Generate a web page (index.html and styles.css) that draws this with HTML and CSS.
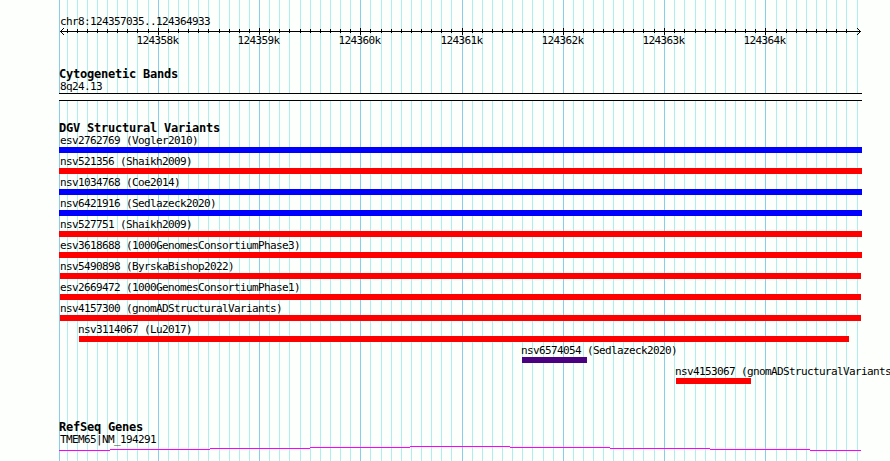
FILE: index.html
```html
<!DOCTYPE html>
<html lang="en">
<head>
<meta charset="utf-8">
<title>chr8:124357035..124364933</title>
<link rel="stylesheet" href="styles.css">
</head>
<body>
<main class="browser">
  <svg class="grid" width="890" height="461" aria-hidden="true">
    <path class="minor" d="M67.5 0v461M77.5 0v461M87.5 0v461M97.5 0v461M107.5 0v461M117.5 0v461M127.5 0v461M137.5 0v461M148.5 0v461M168.5 0v461M178.5 0v461M188.5 0v461M198.5 0v461M208.5 0v461M219.5 0v461M229.5 0v461M239.5 0v461M249.5 0v461M269.5 0v461M279.5 0v461M289.5 0v461M300.5 0v461M310.5 0v461M320.5 0v461M330.5 0v461M340.5 0v461M350.5 0v461M370.5 0v461M381.5 0v461M391.5 0v461M401.5 0v461M411.5 0v461M421.5 0v461M431.5 0v461M441.5 0v461M451.5 0v461M472.5 0v461M482.5 0v461M492.5 0v461M502.5 0v461M512.5 0v461M522.5 0v461M532.5 0v461M543.5 0v461M553.5 0v461M573.5 0v461M583.5 0v461M593.5 0v461M603.5 0v461M613.5 0v461M623.5 0v461M633.5 0v461M643.5 0v461M654.5 0v461M674.5 0v461M684.5 0v461M695.5 0v461M705.5 0v461M715.5 0v461M725.5 0v461M735.5 0v461M745.5 0v461M755.5 0v461M776.5 0v461M786.5 0v461M796.5 0v461M806.5 0v461M816.5 0v461M826.5 0v461M836.5 0v461M846.5 0v461M857.5 0v461"/>
    <path class="major" d="M59.5 0v461M158.5 0v461M259.5 0v461M360.5 0v461M462.5 0v461M563.5 0v461M664.5 0v461M765.5 0v461"/>
  </svg>

  <header class="ruler">
    <div class="label">chr8:124357035..124364933</div>
    <svg class="axis" width="803" height="20" viewBox="59 28 803 20">
      <path class="ink" d="M60 31.5H861M67.5 29v4M77.5 29v4M87.5 29v4M97.5 29v4M107.5 29v4M117.5 29v4M127.5 29v4M137.5 29v4M148.5 29v4M168.5 29v4M178.5 29v4M188.5 29v4M198.5 29v4M208.5 29v4M219.5 29v4M229.5 29v4M239.5 29v4M249.5 29v4M269.5 29v4M279.5 29v4M289.5 29v4M300.5 29v4M310.5 29v4M320.5 29v4M330.5 29v4M340.5 29v4M350.5 29v4M370.5 29v4M381.5 29v4M391.5 29v4M401.5 29v4M411.5 29v4M421.5 29v4M431.5 29v4M441.5 29v4M451.5 29v4M472.5 29v4M482.5 29v4M492.5 29v4M502.5 29v4M512.5 29v4M522.5 29v4M532.5 29v4M543.5 29v4M553.5 29v4M573.5 29v4M583.5 29v4M593.5 29v4M603.5 29v4M613.5 29v4M623.5 29v4M633.5 29v4M643.5 29v4M654.5 29v4M674.5 29v4M684.5 29v4M695.5 29v4M705.5 29v4M715.5 29v4M725.5 29v4M735.5 29v4M745.5 29v4M755.5 29v4M776.5 29v4M786.5 29v4M796.5 29v4M806.5 29v4M816.5 29v4M826.5 29v4M836.5 29v4M846.5 29v4"/>
      <path class="ink" d="M158.5 28v7M259.5 28v7M360.5 28v7M462.5 28v7M563.5 28v7M664.5 28v7M765.5 28v7"/>
      <path class="ink" d="M63 28.5h1M62 29.5h1M61 30.5h1M61 32.5h1M62 33.5h1M63 34.5h1M857 28.5h1M858 29.5h1M859 30.5h1M859 32.5h1M858 33.5h1M857 34.5h1"/>
      <g class="ticks">
        <text x="136.5" y="44">124358k</text>
        <text x="237.5" y="44">124359k</text>
        <text x="338.5" y="44">124360k</text>
        <text x="440.5" y="44">124361k</text>
        <text x="541.5" y="44">124362k</text>
        <text x="642.5" y="44">124363k</text>
        <text x="743.5" y="44">124364k</text>
      </g>
    </svg>
  </header>

  <section class="track bands">
    <h2>Cytogenetic Bands</h2>
    <div class="label">8q24.13</div>
    <div class="band"></div>
  </section>

  <section class="track variants">
    <h2>DGV Structural Variants</h2>
    <div class="feature gain"><span class="label">esv2762769 (Vogler2010)</span><i class="bar"></i></div>
    <div class="feature"><span class="label">nsv521356 (Shaikh2009)</span><i class="bar"></i></div>
    <div class="feature gain"><span class="label">nsv1034768 (Coe2014)</span><i class="bar"></i></div>
    <div class="feature gain"><span class="label">nsv6421916 (Sedlazeck2020)</span><i class="bar"></i></div>
    <div class="feature"><span class="label">nsv527751 (Shaikh2009)</span><i class="bar"></i></div>
    <div class="feature"><span class="label">esv3618688 (1000GenomesConsortiumPhase3)</span><i class="bar"></i></div>
    <div class="feature inner"><span class="label">nsv5490898 (ByrskaBishop2022)</span><i class="bar"></i></div>
    <div class="feature inner"><span class="label">esv2669472 (1000GenomesConsortiumPhase1)</span><i class="bar"></i></div>
    <div class="feature inner"><span class="label">nsv4157300 (gnomADStructuralVariants)</span><i class="bar"></i></div>
    <div class="feature partial" style="--start:20px;--span:770px"><span class="label">nsv3114067 (Lu2017)</span><i class="bar"></i></div>
    <div class="feature partial complex" style="--start:463px;--span:65px"><span class="label">nsv6574054 (Sedlazeck2020)</span><i class="bar"></i></div>
    <div class="feature partial" style="--start:617px;--span:75px"><span class="label">nsv4153067 (gnomADStructuralVariants)</span><i class="bar"></i></div>
  </section>

  <section class="track genes">
    <h2>RefSeq Genes</h2>
    <div class="label">TMEM65|NM_194291</div>
    <svg class="gene" width="803" height="6" viewBox="59 446 803 6" aria-hidden="true">
      <path d="M59 450.5H110M110 449.5H210M210 448.5H310M310 447.5H410M410 446.5H510M510 447.5H610M610 448.5H710M710 449.5H810M810 450.5H861"/>
    </svg>
  </section>
</main>
</body>
</html>
```
FILE: styles.css
```css
* { box-sizing: border-box; }

body {
  margin: 0;
  background: #fdfffc;
  color: #000;
  font: 11px/12px "DejaVu Sans Mono", monospace;
  letter-spacing: -0.622px;
}

.browser {
  position: relative;
  width: 890px;
  height: 461px;
  padding: 15px 0 0 59px;
  overflow: hidden;
}

.grid {
  position: absolute;
  inset: 0;
  z-index: -1;
  fill: none;
  shape-rendering: crispEdges;
}

.minor { stroke: #afeeee; }
.major { stroke: #87ceeb; }

svg { display: block; }

.label {
  display: block;
  height: 13px;
  padding: 1px 0 0 1px;
  white-space: nowrap;
}

h2 {
  margin: 0;
  height: 12px;
  font-size: 12px;
  line-height: 12px;
  font-weight: bold;
  letter-spacing: -0.224px;
  white-space: nowrap;
}

.ruler { height: 53px; }

.axis .ink {
  fill: none;
  stroke: #000;
  shape-rendering: crispEdges;
}

.bands { height: 54px; }

.band {
  width: 803px;
  height: 8px;
  border: solid #000;
  border-width: 1px 0;
  background: #fdfffc;
}

.variants { height: 299px; }

.feature {
  width: 803px;
  height: 21px;
  padding-bottom: 2px;
}

.bar {
  display: block;
  height: 6px;
  background: #f00;
}

.feature.inner .bar {
  width: 801px;
  margin-left: 1px;
}

.feature.partial { padding-left: var(--start); }
.feature.partial .label { margin-left: -1px; padding-left: 0; }
.feature.partial .bar { width: var(--span); }
.gain .bar { background: #00f; }
.complex .bar { background: #4b0082; }

.gene path {
  stroke: #f0f;
  shape-rendering: crispEdges;
}
```
